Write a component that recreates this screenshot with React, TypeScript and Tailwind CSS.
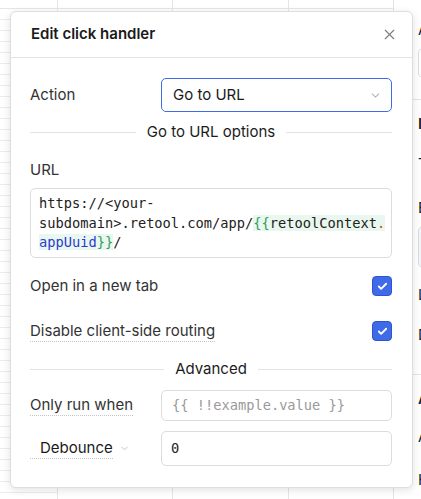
import { X, ChevronDown, Check } from "lucide-react"

const mono = "font-['DejaVu_Sans_Mono',monospace]"

function Divider({ label }: { label: string }) {
  return (
    <div className="flex items-center gap-[11px] h-5">
      <div className="flex-1 h-px bg-[#e2e2e2]" />
      <span className="text-[15px] text-[#1c1c1c]">{label}</span>
      <div className="flex-1 h-px bg-[#e2e2e2]" />
    </div>
  )
}

function Checkbox() {
  return (
    <div className="w-[20px] h-[20px] rounded-[4px] bg-[#3f6be8] border border-[#2d55cc] flex items-center justify-center">
      <Check className="w-[11px] h-[11px] text-white" strokeWidth={4} />
    </div>
  )
}

function Canvas() {
  const rows = Array.from({ length: 44 })
  return (
    <div className="flex-1 relative flex flex-col">
      <div className="h-[8px] flex">
        <div className="w-[57px]" />
        <div className="w-[115px] border-l border-[#e6e6e6]" />
        <div className="w-[116px] border-l border-[#e6e6e6]" />
        <div className="flex-1 border-l border-[#e6e6e6]" />
      </div>
      <div className="flex-1 flex border-t border-[#e6e6e6]">
        <div className="w-[57px] flex flex-col">
          {rows.map((_, i) => (
            <div key={i} className="h-[11px] border-b border-[#ececec]" />
          ))}
        </div>
        <div className="w-[115px] border-l border-[#e6e6e6]" />
        <div className="w-[116px] border-l border-[#e6e6e6]" />
        <div className="flex-1 border-l border-[#e6e6e6]" />
      </div>
    </div>
  )
}

function SidePanel() {
  return (
    <div className="w-[28px] border-l border-[#e4e4e4] bg-white flex flex-col text-[15px] text-[#1c1c1c] overflow-hidden">
      <div className="pl-[24px] mt-[20px] leading-5">A</div>
      <div className="ml-[24px] mt-[8px] h-[30px] w-[40px] rounded-[5px] border border-[#dcdcdc]" />
      <div className="mt-[21px] h-px bg-[#e4e4e4]" />
      <div className="pl-[24px] mt-[14px] leading-5 font-semibold">I</div>
      <div className="pl-[24px] mt-[20px] leading-5">T</div>
      <div className="pl-[24px] mt-[24px] leading-5">E</div>
      <div className="ml-[24px] mt-[8px] h-[42px] w-[40px] rounded-[5px] border border-[#dcdcdc] bg-[#f3f5fb]" />
      <div className="pl-[24px] mt-[17px] leading-5">L</div>
      <div className="pl-[24px] mt-[20px] leading-5">D</div>
      <div className="mt-[29px] h-px bg-[#e4e4e4]" />
      <div className="pl-[24px] mt-[14px] leading-5 font-semibold">A</div>
      <div className="pl-[24px] mt-[18px] leading-5">A</div>
      <div className="pl-[24px] mt-[23px] leading-5">H</div>
    </div>
  )
}

export default function App() {
  return (
    <div className="relative w-[421px] h-[499px] overflow-hidden bg-white font-['Inter',sans-serif] flex">
      <Canvas />
      <SidePanel />

      <div className="absolute left-[10px] top-[11px] w-[403px] h-[477px] bg-white rounded-[6px] border border-[#dedede] shadow-[0_2px_8px_rgba(0,0,0,0.12)] flex flex-col">
        <div className="h-[46px] border-b border-[#e2e2e2] flex items-center justify-between pl-[20px] pr-[14px]">
          <span className="text-[15px] font-semibold text-[#1a1a1a]">Edit click handler</span>
          <X className="w-[17px] h-[17px] text-[#7a7a7a]" strokeWidth={1.6} />
        </div>

        <div className="flex flex-col pl-[19px] pr-[20px]">
          <div className="mt-[20px] flex items-center justify-between">
            <span className="text-[15px] text-[#333]">Action</span>
            <div className="w-[231px] h-[34px] rounded-[5px] border border-[#3f6be8] flex items-center justify-between pl-[11px] pr-[9px]">
              <span className="text-[15px] text-[#1a1a1a]">Go to URL</span>
              <ChevronDown className="w-[13px] h-[13px] text-[#b5b5b5]" strokeWidth={2} />
            </div>
          </div>

          <div className="mt-[10px]">
            <Divider label="Go to URL options" />
          </div>

          <div className="mt-[18px] h-5 leading-5 text-[15px] text-[#333]">URL</div>

          <div className={`mt-[8px] h-[70px] rounded-[5px] border border-[#dcdcdc] pl-[8px] pt-[5px] text-[13.7px] leading-[19.5px] text-[#222] ${mono}`}>
            <div>https://&lt;your-</div>
            <div>
              subdomain&gt;.retool.com/app/
              <span className="bg-[#eaf7ee]">
                <span className="text-[#2f9e5f]">{"{{"}</span>retoolContext<span className="text-[#c2541c]">.</span>
              </span>
            </div>
            <div>
              <span className="bg-[#eaf7ee]">
                <span className="text-[#2b3bd1]">appUuid</span>
                <span className="text-[#2f9e5f]">{"}}"}</span>
              </span>
              /
            </div>
          </div>

          <div className="mt-[18px] h-5 flex items-center justify-between">
            <span className="text-[15px] text-[#333]">Open in a new tab</span>
            <Checkbox />
          </div>

          <div className="mt-[25px] h-5 flex items-center justify-between">
            <span className="text-[15px] text-[#333] leading-5 border-b border-dotted border-[#c4c4c4]">Disable client-side routing</span>
            <Checkbox />
          </div>

          <div className="mt-[18px]">
            <Divider label="Advanced" />
          </div>

          <div className="mt-[11px] flex items-center justify-between">
            <span className="text-[15px] text-[#333] leading-5 border-b border-dotted border-[#c4c4c4]">Only run when</span>
            <div className={`w-[231px] h-[31px] rounded-[5px] border border-[#dcdcdc] flex items-center pl-[10px] text-[13.7px] text-[#9a9a9a] ${mono}`}>
              {"{{ !!example.value }}"}
            </div>
          </div>

          <div className="mt-[10px] flex items-center justify-between">
            <div className="flex items-center gap-[6px]">
              <span className="text-[15px] text-[#1a1a1a] leading-5 pl-[10px] border-b border-dotted border-[#c4c4c4]">Debounce</span>
              <ChevronDown className="w-[11px] h-[11px] text-[#bdbdbd]" strokeWidth={2} />
            </div>
            <div className={`w-[231px] h-[35px] rounded-[5px] border border-[#dcdcdc] flex items-center pl-[9px] text-[13.7px] text-[#222] ${mono}`}>
              0
            </div>
          </div>
        </div>
      </div>
    </div>
  )
}
